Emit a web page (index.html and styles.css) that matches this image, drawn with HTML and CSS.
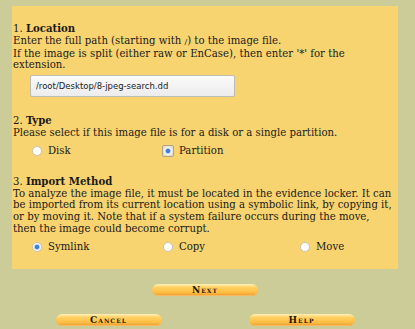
FILE: index.html
```html
<!DOCTYPE html>
<html>
<head>
    <meta name="viewport" content="width=device-width, initial-scale=1.0">
    <link rel="stylesheet" href="styles.css">
</head>
<body>
    <div class="wrap">
        <form class="panel">
            <div class="section first">
                <div class="head">1. <b>Location</b></div>
                <div class="text">Enter the full path (starting with <tt>/</tt>) to the image file.<br>
                If the image is split (either raw or EnCase), then enter '*' for the extension.</div>
                <input class="path" type="text" value="/root/Desktop/8-jpeg-search.dd">
            </div>

            <div class="section">
                <div class="head">2. <b>Type</b></div>
                <div class="text">Please select if this image file is for a disk or a single partition.</div>
                <div class="choices">
                    <label><input type="radio" name="imgtype" value="disk"> Disk</label>
                    <label><span class="focus"><input type="radio" name="imgtype" value="volume" checked></span> Partition</label>
                </div>
            </div>

            <div class="section">
                <div class="head">3. <b>Import Method</b></div>
                <div class="text">To analyze the image file, it must be located in the evidence locker. It can be imported from its current location using a symbolic link, by copying it, or by moving it. Note that if a system failure occurs during the move, then the image could become corrupt.</div>
                <div class="choices">
                    <label><input type="radio" name="sort" value="symlink" checked> Symlink</label>
                    <label><input type="radio" name="sort" value="copy"> Copy</label>
                    <label><input type="radio" name="sort" value="move"> Move</label>
                </div>
            </div>
        </form>

        <div class="next-row">
            <button class="btn" type="button">Next</button>
        </div>
        <div class="btn-row">
            <div><button class="btn" type="button">Cancel</button></div>
            <div><button class="btn" type="button">Help</button></div>
        </div>
    </div>
</body>
</html>
```

FILE: styles.css
```css
body {
    margin: 0;
    background: #cccc99;
    font-family: "DejaVu Serif", serif;
    font-size: 10.15px;
    color: #1a1a1a;
}
.wrap {
    width: 386px;
    margin: 6px 0 0 12px;
}
.panel {
    background: #f7d470;
    padding: 17px 4px 15px 1px;
    line-height: 11.8px;
}
.section + .section {
    margin-top: 18px;
}
.head b {
    font-weight: bold;
}
.text tt {
    font-family: "DejaVu Serif", serif;
    font-size: 8px;
}
.path {
    display: block;
    box-sizing: border-box;
    width: 205px;
    height: 22px;
    margin: 4px 0 0 17px;
    padding: 0 5px;
    border: 1px solid #bdbdb5;
    border-radius: 2px;
    background: linear-gradient(#fbfbfb, #ececec);
    font-family: "DejaVu Sans", sans-serif;
    font-size: 8.5px;
    color: #222;
}
.choices {
    display: grid;
    grid-template-columns: 131px 137px auto;
    padding-left: 19px;
    margin-top: 5px;
    height: 14px;
    align-items: center;
}
.choices label {
    display: flex;
    align-items: center;
    gap: 6px;
}
.choices input {
    appearance: none;
    -webkit-appearance: none;
    display: block;
    width: 10px;
    height: 10px;
    margin: 0;
    border: 1px solid #c8c4b4;
    border-radius: 50%;
    background: #fff;
}
.choices input:checked {
    background: radial-gradient(circle, #3f7fd6 0 1.8px, #a9c6ee 2.4px, #fff 3.6px);
}
.focus {
    display: block;
    margin: -1px;
    border: 1px solid #b0a585;
    border-radius: 2px;
    background: #e8e0c8;
}
.focus input {
    border-color: #e8e0c8;
}
.next-row {
    display: flex;
    justify-content: center;
    margin-top: 15px;
}
.btn-row {
    display: grid;
    grid-template-columns: 1fr 1fr;
    margin-top: 18px;
}
.btn-row div {
    display: flex;
    justify-content: center;
}
.btn {
    width: 106px;
    height: 12px;
    padding: 0;
    border: none;
    border-radius: 6px;
    background: linear-gradient(#fff0b8, #ffd060 30%, #ffbe45 70%, #ea982a);
    box-shadow: inset 0 -1px 0 #f7b860;
    font-family: "DejaVu Serif", serif;
    font-weight: bold;
    font-variant: small-caps;
    font-size: 9px;
    line-height: 12px;
    letter-spacing: 1px;
    color: #1e160a;
}
```
